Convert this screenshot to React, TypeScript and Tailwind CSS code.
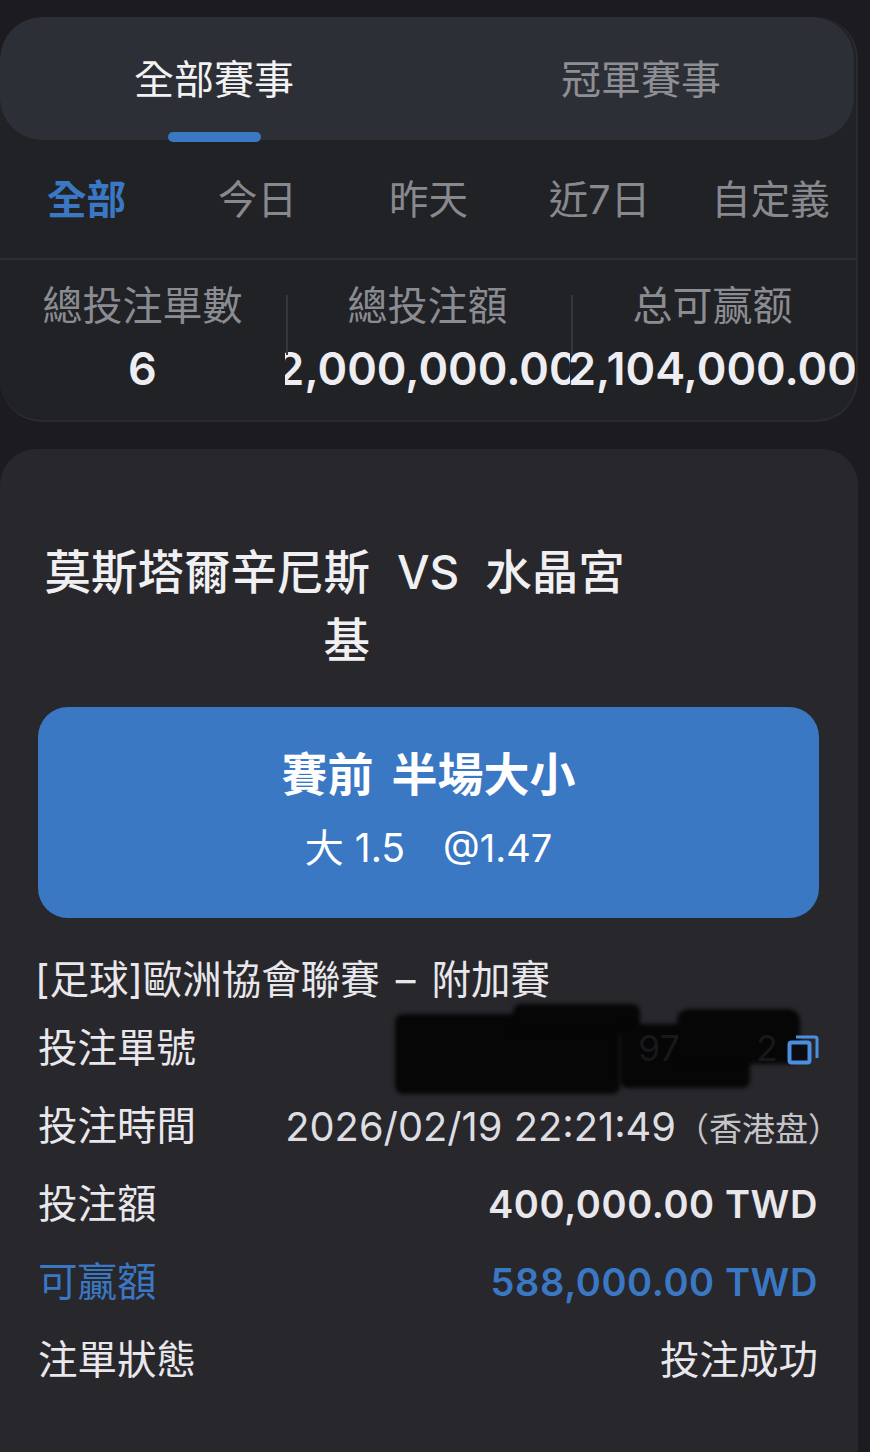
import React from "react";

const cjk = "font-['Inter','Noto_Sans_CJK_TC',sans-serif]";

function Row({ label, children, blue }: { label: string; children: React.ReactNode; blue?: boolean }) {
  return (
    <div className={`relative flex h-[78px] items-center justify-between pr-[2px] text-[39.5px] leading-none ${blue ? "text-[#3a78c4]" : "text-[#e8e8ec]"}`}>
      <span>{label}</span>
      {children}
    </div>
  );
}

function Stat({ label, value, divider }: { label: string; value: string; divider?: boolean }) {
  return (
    <div className="relative flex w-[285px] shrink-0 flex-col items-center">
      <div className="text-[40px] leading-[48px] text-[#8b8c91]">{label}</div>
      <div className="mt-[15px] whitespace-nowrap text-[45px] font-semibold leading-[48px] text-[#eeeef2]">{value}</div>
      {divider && <div className="absolute left-[1px] top-[13px] h-[60px] w-[2px] bg-[#35363b]" />}
    </div>
  );
}

export default function App() {
  return (
    <div className={`h-[1452px] w-[870px] overflow-hidden bg-[#1c1b20] pt-[17px] ${cjk}`}>
      <div className="h-[405px] w-[858px] overflow-hidden rounded-[42px] border-2 border-t-0 border-l-0 border-[#2a2b30] bg-[#212226]">
        <div className="relative flex h-[123px] w-[854px] rounded-[42px] bg-[#2d2f36]">
          <div className="flex w-[428px] justify-center pt-[36px] text-[40px] leading-[54px] text-[#f2f2f4]">全部賽事</div>
          <div className="flex w-[426px] justify-center pt-[36px] text-[40px] leading-[54px] text-[#8e8f94]">冠軍賽事</div>
          <div className="absolute left-[168px] top-[115px] h-[10px] w-[93px] rounded-[5px] bg-[#3a78c4]" />
        </div>
        <div className="grid h-[120px] grid-cols-[repeat(5,171px)] items-center border-b-2 border-[#2d2e33] pl-[1px] pt-[4px] text-center text-[39.5px] leading-none text-[#88898e]">
          <span className="font-bold text-[#3a78c4]">全部</span>
          <span>今日</span>
          <span>昨天</span>
          <span>近7日</span>
          <span>自定義</span>
        </div>
        <div className="flex overflow-hidden pt-[22px]">
          <Stat label="總投注單數" value="6" />
          <div className="w-[285px] shrink-0 overflow-hidden"><Stat label="總投注額" value="2,000,000.00" divider /></div>
          <div className="w-[285px] shrink-0 overflow-hidden"><Stat label="总可赢额" value="2,104,000.00" divider /></div>
        </div>
      </div>

      <div className="mt-[27px] h-[1100px] w-[858px] rounded-t-[36px] bg-[#28272c] px-[38px] pt-[89px]">
        <div className="flex w-[781px] items-start text-[46.5px] font-medium leading-[68px] text-[#f0f0f3]">
          <div className="ml-[5px] w-[327px] text-right">莫斯塔爾辛尼斯基</div>
          <div className="ml-[27px] text-[46px]">VS</div>
          <div className="ml-[26px]">水晶宮</div>
        </div>
        <div className="mt-[33px] flex h-[211px] w-[781px] flex-col items-center rounded-[30px] bg-[#3a78c4] pt-[39px] text-white">
          <div className="text-[46px] font-bold leading-[56px]">賽前<span className="ml-[18px]">半場大小</span></div>
          <div className="mt-[23px] text-[39px] leading-[46px]">大 1.5<span className="ml-[38px] text-[38px]">@1.47</span></div>
        </div>
        <div className="-ml-[3px] mt-[36px] h-[56px] whitespace-nowrap text-[39.5px] leading-[52px] text-[#e8e8ec]">[足球]歐洲協會聯賽<span className="mx-[16px]">–</span>附加賽</div>
        <div className="relative">
          <div className="absolute left-[357px] top-[4px] h-[80px] w-[225px] rounded-[8px] bg-[#060607] blur-[2px]" />
          <div className="absolute left-[475px] top-[-6px] h-[30px] w-[127px] rounded-[8px] bg-[#060607] blur-[2px]" />
          <div className="absolute left-[582px] top-[14px] h-[64px] w-[130px] rounded-[8px] bg-[#060607] blur-[2px]" />
          <div className="absolute left-[639px] top-[-1px] h-[55px] w-[123px] rounded-[12px] bg-[#060607] blur-[2px]" />
          <span className="absolute left-[600px] top-[20px] text-[36px] leading-none text-[#18181b]">97</span>
          <span className="absolute left-[718px] top-[20px] text-[36px] leading-none text-[#18181b]">2</span>
          <Row label="投注單號">
            <svg width="32" height="32" viewBox="0 0 32 32" fill="none" className="relative mt-[2px] -mr-[1px]">
              <rect x="2.5" y="8.5" width="20" height="20" rx="2" stroke="#4a8fe0" strokeWidth="4" fill="#0c0d12" />
              <path d="M9 3h19a2 2 0 0 1 2 2v19" stroke="#4a8fe0" strokeWidth="3" />
            </svg>
          </Row>
          <Row label="投注時間">
            <span className="-mr-[23px] whitespace-nowrap text-[39.8px] font-normal text-[#dedee2]">2026/02/19 22:21:49<span className="text-[33px] text-[#c4c4c8]">（香港盘）</span></span>
          </Row>
          <Row label="投注額">
            <span className="-mt-[2px] text-[38px] font-semibold tracking-[0.6px] text-[#e8e8ec]">400,000.00 TWD</span>
          </Row>
          <Row label="可贏額" blue>
            <span className="-mt-[2px] text-[38px] font-semibold tracking-[0.6px]">588,000.00 TWD</span>
          </Row>
          <Row label="注單狀態">
            <span>投注成功</span>
          </Row>
        </div>
      </div>
    </div>
  );
}
